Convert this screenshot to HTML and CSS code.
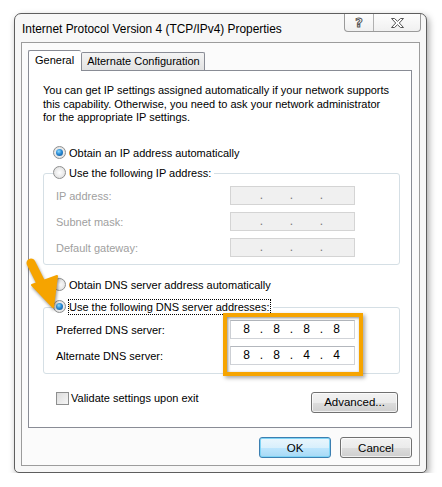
FILE: index.html
```html
<!DOCTYPE html>
<html lang="en">
<head>
    <meta charset="UTF-8" />
    <title>Internet Protocol Version 4 (TCP/IPv4) Properties</title>
    <link rel="stylesheet" href="styles.css">
</head>
<body>

<div class="window">
    <div class="titlebar">
        <span class="title">Internet Protocol Version 4 (TCP/IPv4) Properties</span>
        <div class="caption-btns">
            <span class="cap-btn help">?</span>
            <span class="cap-btn close">
                <svg viewBox="0 0 13 10" width="13" height="10">
                    <polygon points="0.5,0.5 3.5,0.5 6.5,3.3 9.5,0.5 12.5,0.5 8.3,5 12.5,9.5 9.5,9.5 6.5,6.7 3.5,9.5 0.5,9.5 4.7,5" />
                </svg>
            </span>
        </div>
    </div>

    <div class="client">
        <div class="tabs">
            <span class="tab active">General</span>
            <span class="tab">Alternate Configuration</span>
        </div>

        <div class="panel">
            <p class="intro">You can get IP settings assigned automatically if your network supports<br>this capability. Otherwise, you need to ask your network administrator<br>for the appropriate IP settings.</p>

            <div class="radio-row first">
                <span class="radio checked"></span>
                <span>Obtain an IP address automatically</span>
            </div>

            <div class="group disabled">
                <div class="group-head">
                    <span class="radio"></span>
                    <span>Use the following IP address:</span>
                </div>
                <div class="field-row">
                    <span class="field-label">IP address:</span>
                    <span class="ip-box"><i></i><b>.</b><i></i><b>.</b><i></i><b>.</b><i></i></span>
                </div>
                <div class="field-row">
                    <span class="field-label">Subnet mask:</span>
                    <span class="ip-box"><i></i><b>.</b><i></i><b>.</b><i></i><b>.</b><i></i></span>
                </div>
                <div class="field-row">
                    <span class="field-label">Default gateway:</span>
                    <span class="ip-box"><i></i><b>.</b><i></i><b>.</b><i></i><b>.</b><i></i></span>
                </div>
            </div>

            <div class="radio-row dns">
                <span class="radio"></span>
                <span>Obtain DNS server address automatically</span>
            </div>

            <div class="group dns-group">
                <div class="group-head">
                    <span class="radio checked"></span>
                    <span class="focused">Use the following DNS server addresses:</span>
                </div>
                <div class="field-row">
                    <span class="field-label">Preferred DNS server:</span>
                    <span class="ip-box"><i>8</i><b>.</b><i>8</i><b>.</b><i>8</i><b>.</b><i>8</i></span>
                </div>
                <div class="field-row">
                    <span class="field-label">Alternate DNS server:</span>
                    <span class="ip-box"><i>8</i><b>.</b><i>8</i><b>.</b><i>4</i><b>.</b><i>4</i></span>
                </div>
                <div class="highlight"></div>
            </div>

            <div class="bottom-row">
                <div class="check-row">
                    <span class="checkbox"></span>
                    <span>Validate settings upon exit</span>
                </div>
                <button class="btn advanced">Advanced...</button>
            </div>
        </div>

        <div class="dialog-btns">
            <button class="btn default">OK</button>
            <button class="btn">Cancel</button>
        </div>
    </div>
</div>

<!-- freccia arancione sopra il dialogo -->
<svg class="arrow" viewBox="0 0 50 60" width="50" height="60">
    <line x1="12" y1="9" x2="24" y2="33" />
    <polygon points="13,31 38,22 34,53" />
</svg>

</body>
</html>
```

FILE: styles.css
```css
:root {
    --frame: #f7f7f7;
    --client: #fbfbfb;
    --text: #000;
    --gray-text: #a0a0a0;
    --tab-border: #898c95;
    --group-border: #d5dfe5;
    --orange: #f6a400;
}

* {
    box-sizing: border-box;
}

body {
    margin: 0;
    background: #fff;
    font-family: 'Liberation Sans', Arial, sans-serif;
    font-size: 11px;
    color: var(--text);
}

/* Finestra */
.window {
    width: 413px;
    height: 460px;
    margin: 13px 0 0 14px;
    border: 1px solid #5e5e5e;
    border-radius: 7px 7px 5px 5px;
    background: var(--frame);
    box-shadow: 2px 3px 7px rgba(0, 0, 0, 0.35);
    padding: 0 6px 6px;
    display: flex;
    flex-direction: column;
}

.titlebar {
    height: 28px;
    display: flex;
    align-items: flex-start;
    justify-content: space-between;
    padding-left: 1px;
}

.title {
    margin-top: 8px;
    font-size: 11.9px;
    line-height: 15px;
}

.caption-btns {
    display: flex;
    height: 18px;
    margin-right: -1px;
    border: 1px solid #9a9a9a;
    border-top: none;
    border-radius: 0 0 4px 4px;
    background: linear-gradient(#fdfdfd, #f0f0f0);
}

.cap-btn {
    display: flex;
    align-items: center;
    justify-content: center;
}

.cap-btn.help {
    width: 29px;
    border-right: 1px solid #b0b0b0;
    font-family: 'DejaVu Sans', sans-serif;
    font-weight: bold;
    font-size: 13px;
    color: #fff;
    -webkit-text-stroke: 1px #555;
    padding-bottom: 1px;
}

.cap-btn.close {
    width: 46px;
}

.cap-btn.close polygon {
    fill: #fff;
    stroke: #555;
    stroke-width: 1;
}

/* Area client */
.client {
    flex: 1;
    border: 1px solid #9c9c9c;
    background: var(--client);
    padding: 7px 7px 7px 6px;
}

.tabs {
    display: flex;
    align-items: flex-end;
    height: 20px;
    position: relative;
    z-index: 1;
}

.tab {
    height: 18px;
    padding: 0 4px 0 5px;
    border: 1px solid var(--tab-border);
    border-bottom: none;
    border-radius: 2px 2px 0 0;
    background: linear-gradient(#f4f4f4, #e2e2e2);
    line-height: 17px;
    white-space: nowrap;
}

.tab.active {
    height: 21px;
    margin-bottom: -1px;
    padding: 0 7px 3px 6px;
    background: #fff;
    border-right: none;
    line-height: 18px;
}

.panel {
    height: 358px;
    border: 1px solid var(--tab-border);
    background: #fff;
    padding: 13px 11px 0 14px;
}

.intro {
    margin: 0;
    line-height: 13.5px;
    white-space: nowrap;
}

.radio-row,
.group-head,
.check-row {
    display: flex;
    align-items: center;
    height: 16px;
    gap: 3px;
    white-space: nowrap;
}

.radio-row {
    padding-left: 10px;
}

.radio-row.first {
    margin-top: 20px;
}

.radio-row.dns {
    margin-top: 12px;
}

.radio {
    width: 13px;
    height: 13px;
    flex: none;
    border-radius: 50%;
    border: 1px solid #8e8f8f;
    background: radial-gradient(circle at 50% 50%, #fff 0, #e8e8e8 60%, #d6d6d6 100%);
    position: relative;
}

.radio.checked::after {
    content: '';
    position: absolute;
    left: 2px;
    top: 2px;
    width: 7px;
    height: 7px;
    border-radius: 50%;
    background: radial-gradient(circle at 40% 35%, #8fdcff 0, #2a8ad4 45%, #0c4d8a 100%);
}

/* Riquadri di gruppo */
.group {
    position: relative;
    width: 357px;
    border: 1px solid var(--group-border);
    border-radius: 3px;
    padding: 0 0 7px 12px;
    margin-top: 12px;
}

.group-head {
    width: max-content;
    margin: -9px 0 0 -3px;
    padding-right: 3px;
    background: #fff;
}

.field-row {
    display: flex;
    align-items: center;
    height: 19px;
    margin-top: 7px;
}

.group-head + .field-row {
    margin-top: 5px;
}

.field-label {
    width: 174px;
    padding-top: 1px;
}

.ip-box {
    width: 125px;
    height: 19px;
    display: flex;
    align-items: center;
    justify-content: center;
    border: 1px solid #d0d3d8;
    border-top-color: #b3b7bd;
    background: #fff;
    font-size: 12px;
    padding-right: 2px;
}

.ip-box i,
.ip-box b {
    font-style: normal;
    font-weight: normal;
    text-align: center;
}

.ip-box i {
    width: 22px;
}

.ip-box b {
    width: 8px;
}

.group.disabled .field-label {
    color: var(--gray-text);
}

.group.disabled .ip-box {
    background: #f0f0f0;
    border-color: #d4d4d4;
    color: #777;
}

.dns-group {
    margin-top: 14px;
    padding-bottom: 8px;
}

.focused {
    outline: 1px dotted #000;
    outline-offset: 0;
    line-height: 14px;
}

.highlight {
    position: absolute;
    left: 179px;
    top: 5px;
    width: 140px;
    height: 63px;
    border: 4px solid var(--orange);
    box-shadow: 2px 2px 4px rgba(0, 0, 0, 0.35), inset 1px 1px 3px rgba(0, 0, 0, 0.45);
}

.bottom-row {
    display: flex;
    justify-content: space-between;
    align-items: flex-start;
    margin-top: 18px;
    padding: 0 2px 0 13px;
}

.check-row {
    height: 13px;
    gap: 2px;
}

.checkbox {
    width: 13px;
    height: 13px;
    border: 1px solid #8e8f8f;
    background: linear-gradient(135deg, #dcdcdc, #f6f6f6);
}

/* Pulsanti */
.btn {
    font-family: inherit;
    font-size: 11.5px;
    color: #000;
    height: 21px;
    padding: 0;
    border: 1px solid #707070;
    border-radius: 3px;
    background: linear-gradient(#f2f2f2 0, #ebebeb 50%, #dddddd 51%, #cfcfcf 100%);
    box-shadow: inset 0 0 0 1px rgba(255, 255, 255, 0.7);
}

.btn.advanced {
    width: 87px;
}

.dialog-btns {
    display: flex;
    justify-content: flex-end;
    gap: 9px;
    margin-top: 9px;
}

.dialog-btns .btn {
    width: 72px;
}

.btn.default {
    border-color: #3c7fb1;
    background: linear-gradient(#eaf6fd 0, #d9f0fc 50%, #bee6fd 51%, #a7d9f5 100%);
    box-shadow: inset 0 0 0 1px #7fd4f5;
}

.arrow {
    position: absolute;
    left: 19px;
    top: 254px;
    filter: drop-shadow(1px 2px 1.5px rgba(0, 0, 0, 0.4));
}

.arrow line {
    stroke: var(--orange);
    stroke-width: 9;
    stroke-linecap: round;
}

.arrow polygon {
    fill: var(--orange);
    stroke: var(--orange);
    stroke-width: 2;
    stroke-linejoin: round;
}
```
